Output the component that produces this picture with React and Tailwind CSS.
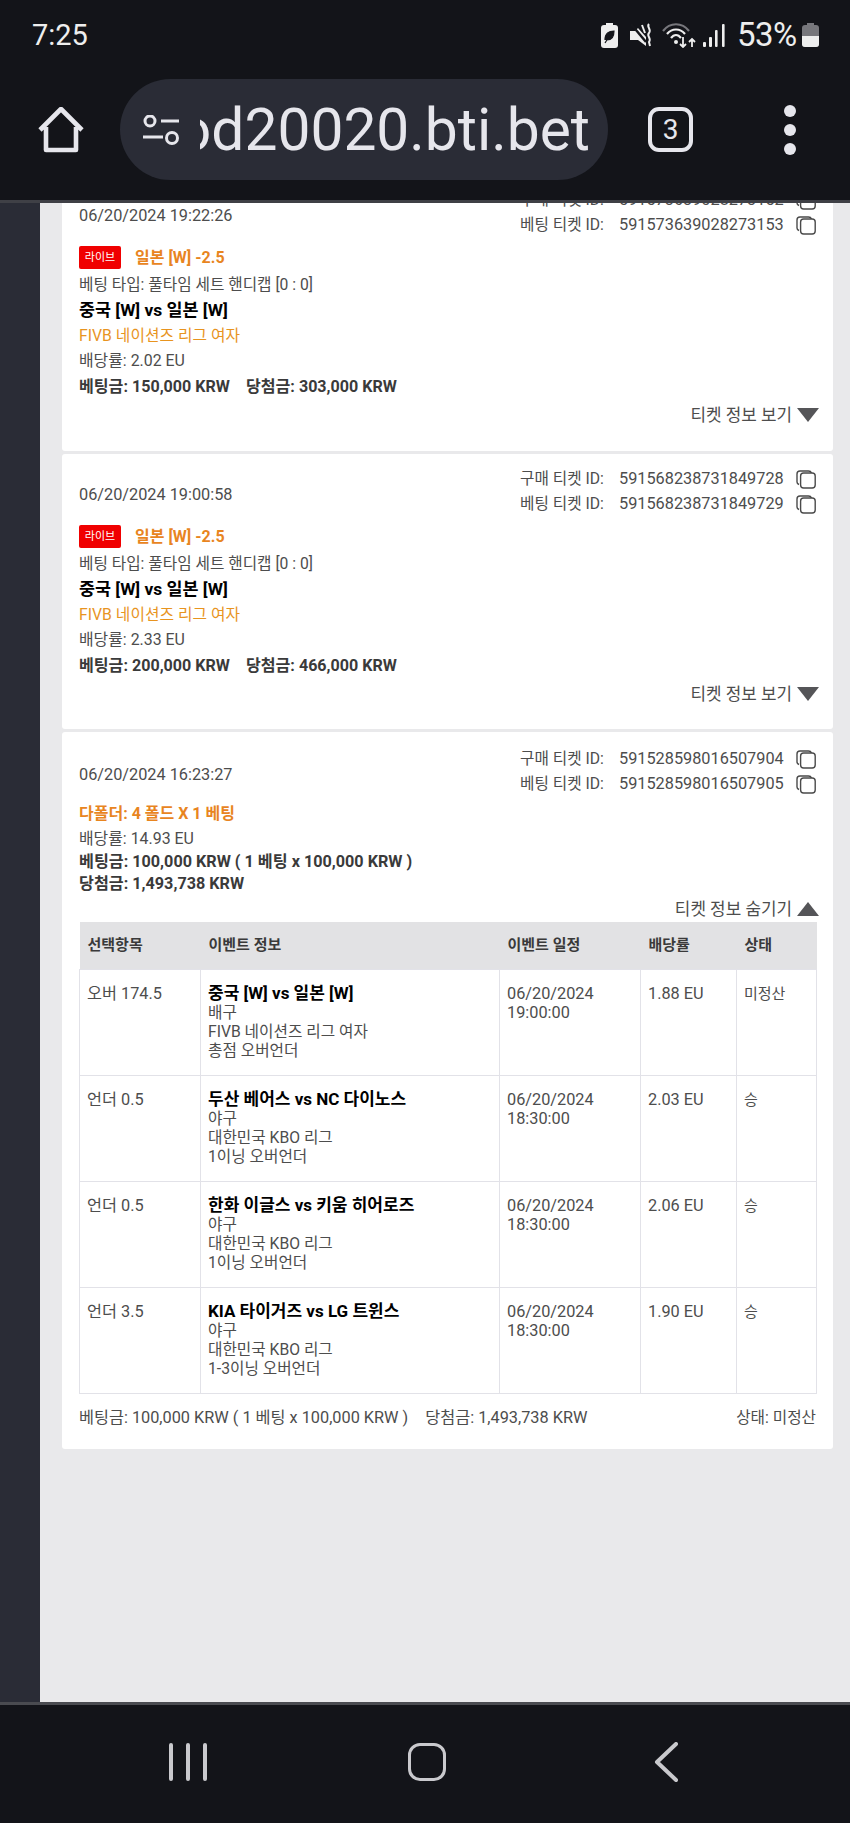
import React from "react";

const Copy = () => (
  <svg width="21" height="20" viewBox="0 0 21 20" fill="none" stroke="#4a4a4a" strokeWidth="1.4" className="shrink-0">
    <path d="M3 15.5 C1.6 15 1 14.2 1 13 V5 C1 3 2 2 4 2 H12.5 C14 2 15 2.6 15.5 4" />
    <rect x="4.6" y="4" width="14.6" height="15" rx="3" fill="#fff" />
  </svg>
);

const IdRow = ({ label, id }) => (
  <div className="flex items-center h-[25px] leading-[25px]">
    <span className="w-[99px] text-[15.7px]">{label}</span>
    <span className="w-[177px]">{id}</span>
    <Copy />
  </div>
);

const Head = ({ date, a, b }) => (
  <div className="flex justify-between h-[50px] items-center">
    <span className="pt-[8px]">{date}</span>
    <div className="flex flex-col">
      <IdRow label="구매 티켓 ID:" id={a} />
      <IdRow label="베팅 티켓 ID:" id={b} />
    </div>
  </div>
);

const Toggle = ({ label, up }) => (
  <div className="flex justify-end items-center h-[24px] gap-[5px] -mr-[2px]">
    <span className="leading-[24px] text-[16.9px]">{label}</span>
    <svg width="22" height="14" viewBox="0 0 22 14" fill="#555558" className="shrink-0">
      <polygon points={up ? "11,0 22,14 0,14" : "0,0 22,0 11,14"} />
    </svg>
  </div>
);

const SingleTicket = ({ date, a, b, odds, stake, win, first }) => (
  <section className={`bg-white rounded-[3px] pt-[12px] pl-[17px] pr-[16px] ${first ? "h-[276px]" : "h-[275px]"}`}>
    <Head date={date} a={a} b={b} />
    <div className="flex items-center h-[23px] mt-[9px] gap-[14px]">
      <span className="w-[42px] h-[23px] bg-[#f00000] rounded-[2px] text-white text-[11px] leading-[23px] text-center">라이브</span>
      <span className="text-[#e8851f] font-bold text-[16px] leading-[23px]">일본 [W] -2.5</span>
    </div>
    <div className="h-[26px] mt-[3px] leading-[26px] text-[15.7px]">베팅 타입: 풀타임 세트 핸디캡 [0 : 0]</div>
    <div className="h-[25px] leading-[25px] font-bold text-black text-[17.4px]">중국 [W] vs 일본 [W]</div>
    <div className="h-[25px] leading-[25px] text-[#e8941f] text-[15.8px]">FIVB 네이션즈 리그 여자</div>
    <div className="h-[26px] leading-[26px] text-[15.9px]">배당률: {odds} EU</div>
    <div className="h-[26px] leading-[26px] font-bold text-[#3a3a3a] text-[16.1px] flex gap-[16px]">
      <span>베팅금: {stake} KRW</span>
      <span>당첨금: {win} KRW</span>
    </div>
    <div className="mt-[3px]"><Toggle label="티켓 정보 보기" /></div>
  </section>
);

const rows = [
  ["오버 174.5", "중국 [W] vs 일본 [W]", "배구", "FIVB 네이션즈 리그 여자", "총점 오버언더", "19:00:00", "1.88 EU", "미정산"],
  ["언더 0.5", "두산 베어스 vs NC 다이노스", "야구", "대한민국 KBO 리그", "1이닝 오버언더", "18:30:00", "2.03 EU", "승"],
  ["언더 0.5", "한화 이글스 vs 키움 히어로즈", "야구", "대한민국 KBO 리그", "1이닝 오버언더", "18:30:00", "2.06 EU", "승"],
  ["언더 3.5", "KIA 타이거즈 vs LG 트윈스", "야구", "대한민국 KBO 리그", "1-3이닝 오버언더", "18:30:00", "1.90 EU", "승"],
];

const Cell = ({ children }) => (
  <td className="border border-[#e2e2e8] px-[7px] pt-[14px] align-top leading-[19px]">{children}</td>
);

const Th = ({ w, children }) => (
  <th className={`${w} text-left font-bold text-[15px] text-[#3a3a3a] px-[8px] leading-[19px]`}>{children}</th>
);

const ParlayTicket = () => (
  <section className="bg-white rounded-[3px] pt-[14px] pl-[17px] pr-[16px] h-[717px]">
    <Head date="06/20/2024 16:23:27" a="591528598016507904" b="591528598016507905" />
    <div className="h-[24px] mt-[6px] leading-[24px] font-bold text-[#e8851f] text-[16px]">다폴더: 4 폴드 X 1 베팅</div>
    <div className="h-[25px] leading-[25px] text-[15.9px]">배당률: 14.93 EU</div>
    <div className="h-[22px] leading-[22px] font-bold text-[#3a3a3a] text-[16.2px]">베팅금: 100,000 KRW ( 1 베팅 x 100,000 KRW )</div>
    <div className="h-[22px] leading-[22px] font-bold text-[#3a3a3a] text-[16.2px]">당첨금: 1,493,738 KRW</div>
    <div className="mt-[2px]"><Toggle label="티켓 정보 숨기기" up /></div>
    <table className="table-fixed w-[737px] border-collapse mt-[1px]">
      <thead>
        <tr className="h-[47px] bg-[#e2e2e4]">
          <Th w="w-[121px]">선택항목</Th>
          <Th w="w-[299px]">이벤트 정보</Th>
          <Th w="w-[141px]">이벤트 일정</Th>
          <Th w="w-[96px]">배당률</Th>
          <Th w="w-[80px]">상태</Th>
        </tr>
      </thead>
      <tbody>
        {rows.map((r) => (
          <tr key={r[1]} className="h-[106px]">
            <Cell>{r[0]}</Cell>
            <Cell>
              <div className="font-bold text-black text-[17px]">{r[1]}</div>
              <div className="text-[15.7px]">{r[2]}</div>
              <div className="text-[15.7px]">{r[3]}</div>
              <div className="text-[15.7px]">{r[4]}</div>
            </Cell>
            <Cell>06/20/2024<br />{r[5]}</Cell>
            <Cell>{r[6]}</Cell>
            <Cell><span className="text-[15px]">{r[7]}</span></Cell>
          </tr>
        ))}
      </tbody>
    </table>
    <div className="flex justify-between mt-[12px] leading-[24px] w-[737px]">
      <div className="flex gap-[17px]">
        <span>베팅금: 100,000 KRW ( 1 베팅 x 100,000 KRW )</span>
        <span>당첨금: 1,493,738 KRW</span>
      </div>
      <span className="text-[15.7px]">상태: 미정산</span>
    </div>
  </section>
);

const StatusIcons = () => (
  <div className="flex items-center">
    <svg width="17" height="25" viewBox="0 0 17 25" className="shrink-0">
      <rect x="5" y="0" width="7" height="3" fill="#eee" />
      <rect x="0" y="2" width="17" height="23" rx="3" fill="#eee" />
      <path d="M4 17 C4 10 8 8 13 8 C13 14 10 17 6 17 M4 20 L9 12" fill="#15161b" stroke="#15161b" strokeWidth="1.2" />
    </svg>
    <svg width="23" height="24" viewBox="0 0 23 24" className="ml-[12px] shrink-0" fill="#eee">
      <path d="M0 8 H5 L8 5 L16 14 V23 L8 17 H0 Z" />
      <path d="M1 1 L16 19" stroke="#15161b" strokeWidth="2.5" />
      <path d="M12 2 L15 10" stroke="#eee" strokeWidth="2" />
      <path d="M19 1 C16 4 22 6 19 10 C16 13 22 15 19 19 L20 23" fill="none" stroke="#eee" strokeWidth="2" />
    </svg>
    <svg width="34" height="25" viewBox="0 0 34 25" fill="none" className="ml-[9px] shrink-0">
      <path d="M1 8 C8 -1 20 -1 27 8" stroke="#77777c" strokeWidth="2.2" />
      <path d="M5 11 C10 5 18 5 23 11" stroke="#eee" strokeWidth="2.2" />
      <path d="M9 15 C12 11 16 11 19 15" stroke="#eee" strokeWidth="2.2" />
      <circle cx="14" cy="19" r="2" fill="#eee" />
      <path d="M21 14 V24 M18 21 L21 24 L24 21 M30 24 V16 M27 19 L30 16 L33 19" stroke="#eee" strokeWidth="1.8" />
    </svg>
    <svg width="22" height="23" viewBox="0 0 22 23" className="ml-[7px] shrink-0" fill="#eee">
      <rect x="0" y="18" width="3" height="5" rx="1" />
      <rect x="6" y="13" width="3" height="10" rx="1" />
      <rect x="12" y="6" width="2.6" height="17" rx="1" />
      <rect x="19" y="0" width="2.6" height="23" rx="1" />
    </svg>
    <span className="ml-[12px] text-[33px] leading-[36px] text-[#eee] w-[61px] tracking-[-0.5px] whitespace-nowrap">53%</span>
    <svg width="17" height="24" viewBox="0 0 17 24" className="ml-[4px] shrink-0">
      <rect x="5" y="0" width="7" height="3" fill="#77777c" />
      <rect x="0" y="2" width="17" height="22" rx="3" fill="#77777c" />
      <path d="M0 13 H17 V21 A3 3 0 0 1 14 24 H3 A3 3 0 0 1 0 21 Z" fill="#eee" />
    </svg>
  </div>
);

const Toolbar = () => (
  <div className="flex items-center h-[101px] mt-[9px]">
    <svg width="46" height="46" viewBox="0 0 46 46" fill="none" stroke="#e6e6ec" strokeWidth="4.6" strokeLinejoin="round" className="ml-[38px] shrink-0">
      <path d="M2 23 L23 2 L44 23 M8 20 V43 H38 V20" />
    </svg>
    <div className="ml-[36px] w-[488px] h-[101px] rounded-full bg-[#2a2c36] flex items-center shrink-0">
      <svg width="38" height="30" viewBox="0 0 38 30" fill="none" stroke="#e6e6ec" strokeWidth="3" className="ml-[22px] shrink-0">
        <circle cx="8" cy="6" r="5" />
        <path d="M19 6 H37 M1 22 H21" />
        <circle cx="30" cy="23" r="5.5" />
      </svg>
      <div className="ml-[20px] w-[390px] overflow-hidden flex justify-end">
        <span className="text-[#e6e6ec] text-[58.7px] leading-[74px] whitespace-nowrap shrink-0">od20020.bti.bet</span>
      </div>
    </div>
    <div className="ml-[40px] w-[45px] h-[45px] rounded-[11px] border-[4.5px] border-[#e6e6ec] flex items-center justify-center text-[#e6e6ec] text-[28px] leading-none shrink-0">3</div>
    <div className="ml-[91px] flex flex-col gap-[7px] shrink-0">
      <span className="w-[12px] h-[12px] rounded-full bg-[#e6e6ec]" />
      <span className="w-[12px] h-[12px] rounded-full bg-[#e6e6ec]" />
      <span className="w-[12px] h-[12px] rounded-full bg-[#e6e6ec]" />
    </div>
  </div>
);

export default function App() {
  return (
    <div className="w-[850px] h-[1823px] flex flex-col overflow-hidden bg-[#131419] font-[Roboto,'Noto_Sans_CJK_KR',sans-serif]">
      <header className="h-[203px] shrink-0 bg-[#131419] border-b-[3px] border-[#3f4046]">
        <div className="flex justify-between items-center h-[70px] pl-[32px] pr-[31px]">
          <span className="text-[29px] leading-[36px] text-[#eee]">7:25</span>
          <StatusIcons />
        </div>
        <Toolbar />
      </header>
      <div className="flex flex-1 min-h-0 overflow-hidden">
        <div className="w-[40px] shrink-0 bg-[#2a2c36]" />
        <main className="flex-1 bg-[#e9e9eb] pl-[22px] pr-[18px] text-[16.3px] text-[#4d4d4d] whitespace-nowrap">
          <div className="-mt-[28px] flex flex-col gap-[3px]">
            <SingleTicket first date="06/20/2024 19:22:26" a="591573639028273152" b="591573639028273153" odds="2.02" stake="150,000" win="303,000" />
            <SingleTicket date="06/20/2024 19:00:58" a="591568238731849728" b="591568238731849729" odds="2.33" stake="200,000" win="466,000" />
            <ParlayTicket />
          </div>
        </main>
      </div>
      <footer className="h-[121px] shrink-0 bg-[#131419] border-t-[3px] border-[#4a4b50] flex items-center">
        <svg width="38" height="38" viewBox="0 0 38 38" fill="none" stroke="#c9c9cd" strokeWidth="4" strokeLinecap="round" className="ml-[169px] mb-[5px] shrink-0">
          <path d="M2 2 V36 M19 2 V36 M36 2 V36" />
        </svg>
        <div className="ml-[201px] mb-[5px] w-[38px] h-[38px] rounded-[12px] border-[3.5px] border-[#c9c9cd] shrink-0" />
        <svg width="24" height="40" viewBox="0 0 24 40" fill="none" stroke="#c9c9cd" strokeWidth="4" strokeLinecap="round" strokeLinejoin="round" className="ml-[208px] mb-[5px] shrink-0">
          <path d="M22 2 L3 20 L22 38" />
        </svg>
      </footer>
    </div>
  );
}
